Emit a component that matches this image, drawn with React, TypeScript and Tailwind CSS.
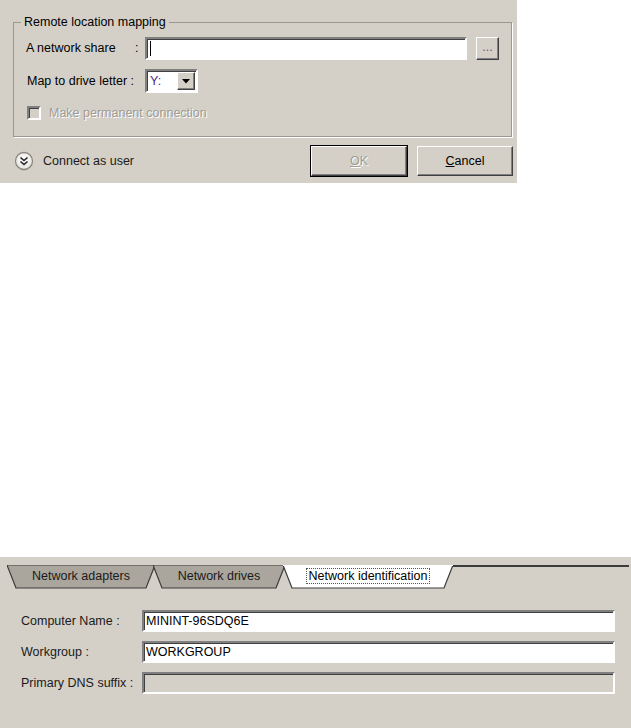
import React from "react";

const sunken =
  "border-2 border-t-[#808080] border-l-[#808080] border-b-white border-r-white shadow-[inset_1px_1px_0_#404040]";
const raised =
  "border border-t-white border-l-white border-b-[#404040] border-r-[#404040] shadow-[inset_-1px_-1px_0_#808080]";

function Tab({ label, width, active }: { label: string; width: number; active?: boolean }) {
  const w = width;
  return (
    <div className="relative h-[25px] -ml-[2px] first:ml-0 flex items-center justify-center" style={{ width: w }}>
      <svg className="absolute inset-0" width={w} height={25} viewBox={`0 0 ${w} 25`}>
        <polygon
          points={`0,0 9,23 ${w - 9},23 ${w},0`}
          fill={active ? "#ffffff" : "#aaa69d"}
          stroke="#3c3c3c"
          strokeWidth="1.2"
        />
        {active ? <line x1="0" y1="0.5" x2={w} y2="0.5" stroke="#ffffff" strokeWidth="1" /> : null}
      </svg>
      {active ? (
        <span className="relative mt-[-3px] border border-dotted border-[#555] px-[2px] leading-[14px] text-black">
          {label}
        </span>
      ) : (
        <span className="relative mt-[-3px] leading-[14px] text-[#1a1a1a]">{label}</span>
      )}
    </div>
  );
}

function FieldRow({ label, value, disabled }: { label: string; value: string; disabled?: boolean }) {
  return (
    <div className="flex items-center h-[22px]">
      <span className="w-[121px] text-[#1a1a1a]">{label}</span>
      <div
        className={`w-[473px] h-[22px] flex items-center pl-[2px] ${sunken} ${
          disabled ? "bg-[#d4d0c8]" : "bg-white"
        }`}
      >
        {value}
      </div>
    </div>
  );
}

export default function App() {
  return (
    <div className="min-h-screen bg-white text-[12.5px] text-black" style={{ fontFamily: '"Liberation Sans", Arial, sans-serif' }}>
      {/* mapping dialog */}
      <div className="w-[517px] h-[183px] bg-[#d4d0c8] pt-[15px] pl-[13px] pr-[4px]">
        <fieldset className="w-[499px] h-[122px] border border-[#9c988f] shadow-[1px_1px_0_#fff]">
          <legend className="ml-[7px] px-[3px] leading-[14px] text-black">Remote location mapping</legend>
          <div className="flex items-center h-[23px] mt-[8px] pl-[12px]">
            <span className="w-[109px]">A network share</span>
            <span className="w-[10px]">:</span>
            <div className={`w-[322px] h-[23px] bg-white flex items-center pl-[3px] ${sunken}`}>
              <span className="w-px h-[15px] bg-black" />
            </div>
            <button className={`ml-[9px] w-[23px] h-[23px] bg-[#d4d0c8] flex items-center justify-center text-[#7a4a8a] leading-none pb-[2px] ${raised}`}>
              ...
            </button>
          </div>
          <div className="flex items-center h-[24px] mt-[9px] pl-[13px]">
            <span className="w-[118px]">Map to drive letter :</span>
            <div className={`w-[53px] h-[24px] bg-white flex items-center justify-between pl-[3px] pr-[1px] ${sunken}`}>
              <span className="text-[#4b2a8a]">Y:</span>
              <span className={`w-[18px] h-[18px] bg-[#d4d0c8] flex items-center justify-center ${raised}`}>
                <svg width="8" height="5" viewBox="0 0 8 5">
                  <polygon points="0,0 8,0 4,4.5" fill="#000" />
                </svg>
              </span>
            </div>
          </div>
          <div className="flex items-center h-[16px] mt-[12px] pl-[13px]">
            <span className={`w-[14px] h-[14px] bg-[#d4d0c8] ${sunken}`} />
            <span className="ml-[8px] text-[#a09c94] [text-shadow:1px_1px_0_#fff]">Make permanent connection</span>
          </div>
        </fieldset>
        <div className="flex items-center mt-[8px]">
          <svg width="20" height="20" viewBox="0 0 20 20" className="ml-[1px]">
            <defs>
              <radialGradient id="cg" cx="50%" cy="40%" r="60%">
                <stop offset="0%" stopColor="#ffffff" />
                <stop offset="100%" stopColor="#e4e2dc" />
              </radialGradient>
            </defs>
            <circle cx="10" cy="10" r="8.5" fill="url(#cg)" stroke="#8a8780" strokeWidth="1.3" />
            <path d="M6.5 6.5 L10 9.5 L13.5 6.5 M6.5 10.5 L10 13.5 L13.5 10.5" fill="none" stroke="#222" strokeWidth="1.6" />
          </svg>
          <span className="ml-[9px] text-[#1a1a1a]">Connect as user</span>
          <div className="ml-auto flex items-center gap-[9px]">
            <div className="border border-black">
              <button className={`w-[96px] h-[30px] bg-[#d4d0c8] text-[#a09c94] [text-shadow:1px_1px_0_#fff] ${raised}`}>
                <span className="underline">O</span>K
              </button>
            </div>
            <button className={`w-[96px] h-[30px] bg-[#d4d0c8] text-black ${raised}`}>
              <span className="underline">C</span>ancel
            </button>
          </div>
        </div>
      </div>

      {/* network settings panel */}
      <div className="mt-[374px] h-[171px] bg-[#d4d0c8] pt-[8px]">
        <div className="flex items-start pl-[7px]">
          <Tab label="Network adapters" width={148} />
          <Tab label="Network drives" width={132} />
          <Tab label="Network identification" width={170} active />
          <div className="w-[176px] h-[2px] bg-[#3c3c3c]" />
        </div>
        <div className="flex flex-col gap-[9px] mt-[20px] pl-[21px]">
          <FieldRow label="Computer Name :" value="MININT-96SDQ6E" />
          <FieldRow label="Workgroup :" value="WORKGROUP" />
          <FieldRow label="Primary DNS suffix :" value="" disabled />
        </div>
      </div>
    </div>
  );
}
